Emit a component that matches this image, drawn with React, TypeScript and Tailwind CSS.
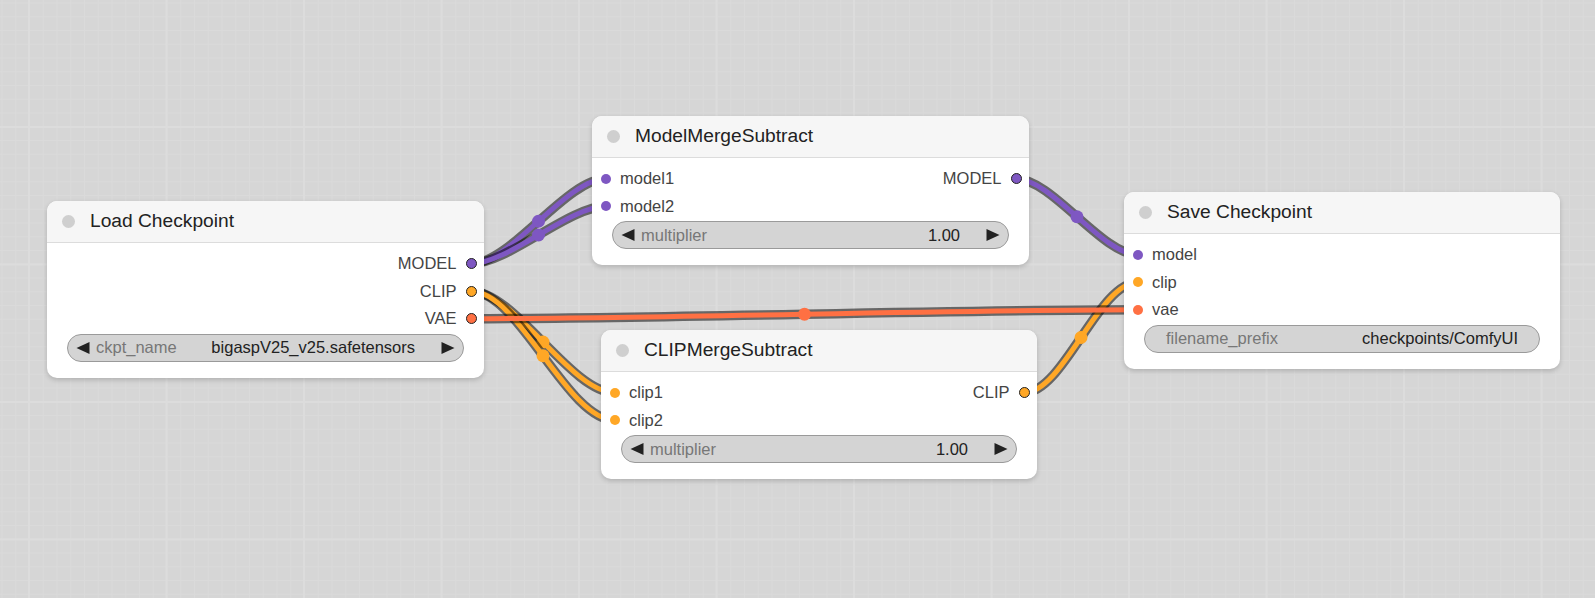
import React from "react"

const COLORS = {
  MODEL: "#7e57c2",
  CLIP: "#ffa726",
  VAE: "#ff7043",
} as const

type SlotType = keyof typeof COLORS

type Slot = { name: string; type: SlotType }

type Widget = { kind: "combo" | "number" | "text"; label: string; value: string }

type NodeDef = {
  id: string
  title: string
  x: number
  y: number
  w: number
  inputs: Slot[]
  outputs: Slot[]
  widget: Widget
}

const HEADER = 42
const BODY_TOP = 7
const ROW = 27.5

const nodes: NodeDef[] = [
  {
    id: "load",
    title: "Load Checkpoint",
    x: 47,
    y: 201,
    w: 437,
    inputs: [],
    outputs: [
      { name: "MODEL", type: "MODEL" },
      { name: "CLIP", type: "CLIP" },
      { name: "VAE", type: "VAE" },
    ],
    widget: { kind: "combo", label: "ckpt_name", value: "bigaspV25_v25.safetensors" },
  },
  {
    id: "mms",
    title: "ModelMergeSubtract",
    x: 592,
    y: 116,
    w: 437,
    inputs: [
      { name: "model1", type: "MODEL" },
      { name: "model2", type: "MODEL" },
    ],
    outputs: [{ name: "MODEL", type: "MODEL" }],
    widget: { kind: "number", label: "multiplier", value: "1.00" },
  },
  {
    id: "cms",
    title: "CLIPMergeSubtract",
    x: 601,
    y: 330,
    w: 436,
    inputs: [
      { name: "clip1", type: "CLIP" },
      { name: "clip2", type: "CLIP" },
    ],
    outputs: [{ name: "CLIP", type: "CLIP" }],
    widget: { kind: "number", label: "multiplier", value: "1.00" },
  },
  {
    id: "save",
    title: "Save Checkpoint",
    x: 1124,
    y: 192,
    w: 436,
    inputs: [
      { name: "model", type: "MODEL" },
      { name: "clip", type: "CLIP" },
      { name: "vae", type: "VAE" },
    ],
    outputs: [],
    widget: { kind: "text", label: "filename_prefix", value: "checkpoints/ComfyUI" },
  },
]

// [from node, output index, to node, input index]
const links: [string, number, string, number][] = [
  ["load", 0, "mms", 0],
  ["load", 0, "mms", 1],
  ["mms", 0, "save", 0],
  ["load", 1, "cms", 0],
  ["load", 1, "cms", 1],
  ["cms", 0, "save", 1],
  ["load", 2, "save", 2],
]

function slotPos(node: NodeDef, index: number, output: boolean) {
  const y = node.y + HEADER + BODY_TOP + ROW * index + ROW / 2
  const x = output ? node.x + node.w - 13 : node.x + 14
  return { x, y }
}

function findNode(id: string) {
  return nodes.find((n) => n.id === id)!
}

function Links() {
  return (
    <svg className="absolute inset-0" width={1595} height={598}>
      {links.map(([from, oi, to, ii], i) => {
        const a = slotPos(findNode(from), oi, true)
        const b = slotPos(findNode(to), ii, false)
        const dist = Math.hypot(b.x - a.x, b.y - a.y) * 0.25
        const d = `M${a.x},${a.y} C${a.x + dist},${a.y} ${b.x - dist},${b.y} ${b.x},${b.y}`
        const color = COLORS[findNode(from).outputs[oi].type]
        return (
          <g key={i}>
            <path d={d} fill="none" stroke="rgba(0,0,0,0.52)" strokeWidth={9.5} />
            <path d={d} fill="none" stroke={color} strokeWidth={5} />
            <circle cx={(a.x + b.x) / 2} cy={(a.y + b.y) / 2} r={6.5} fill={color} />
          </g>
        )
      })}
    </svg>
  )
}

function Arrow({ dir }: { dir: "left" | "right" }) {
  return (
    <svg width="14" height="14" viewBox="0 0 14 14" className="shrink-0">
      <polygon points={dir === "left" ? "13.5,1 13.5,13 0.5,7" : "0.5,1 0.5,13 13.5,7"} fill="#222" />
    </svg>
  )
}

function NodeWidget({ widget }: { widget: Widget }) {
  if (widget.kind === "text") {
    return (
      <div className="mx-[20px] mt-[1px] flex h-[28px] items-center rounded-full border border-[#9a9a9a] bg-[#d4d4d4] px-[21px] text-[16.5px]">
        <span className="text-[#777]">{widget.label}</span>
        <span className="ml-auto text-[#222]">{widget.value}</span>
      </div>
    )
  }
  return (
    <div className="mx-[20px] mt-[1px] flex h-[28px] items-center rounded-full border border-[#9a9a9a] bg-[#d4d4d4] pl-[8px] pr-[8px] text-[16.5px]">
      <Arrow dir="left" />
      <span className="ml-[6px] text-[#777]">{widget.label}</span>
      <span className="ml-auto mr-[26px] text-[#222]">{widget.value}</span>
      <Arrow dir="right" />
    </div>
  )
}

function GraphNode({ node }: { node: NodeDef }) {
  const rows = Math.max(node.inputs.length, node.outputs.length)

  return (
    <div
      className="absolute overflow-hidden rounded-[10px] bg-white shadow-[0_2px_5px_rgba(0,0,0,0.18)]"
      style={{ left: node.x, top: node.y, width: node.w }}
    >
      <div className="flex h-[42px] items-center border-b border-[#dcdcdc] bg-[#f6f6f6] pl-[15px]">
        <span className="h-[13px] w-[13px] rounded-full bg-[#cfcfcf]" />
        <span className="ml-[15px] text-[19.2px] text-[#222]">{node.title}</span>
      </div>
      <div className="pt-[7px] pb-[16px]">
        {Array.from({ length: rows }).map((_, i) => {
          const input = node.inputs[i]
          const output = node.outputs[i]
          return (
            <div key={i} className="flex h-[27.5px] items-center text-[16.5px] text-[#444]">
              {input && (
                <div className="flex items-center pl-[9px]">
                  <span
                    className="h-[10px] w-[10px] rounded-full"
                    style={{ backgroundColor: COLORS[input.type] }}
                  />
                  <span className="ml-[9px]">{input.name}</span>
                </div>
              )}
              {output && (
                <div className="ml-auto flex items-center pr-[7.5px]">
                  <span>{output.name}</span>
                  <span
                    className="ml-[9px] h-[11px] w-[11px] rounded-full border-[1.5px] border-[#222]"
                    style={{ backgroundColor: COLORS[output.type] }}
                  />
                </div>
              )}
            </div>
          )
        })}
        <NodeWidget widget={node.widget} />
      </div>
    </div>
  )
}

export default function App() {
  return (
    <div className="relative h-[598px] w-[1595px] overflow-hidden bg-[#d6d6d6] bg-[image:linear-gradient(to_right,#dcdcdc_2px,transparent_2px),linear-gradient(to_bottom,#dcdcdc_2px,transparent_2px),linear-gradient(to_right,#dadada_1px,transparent_1px),linear-gradient(to_bottom,#dadada_1px,transparent_1px)] bg-size-[137.5px_137.5px,137.5px_137.5px,13.75px_13.75px,13.75px_13.75px] bg-position-[28px_0,0_126px,1.5px_0,0_2.5px] font-['Liberation_Sans',Arial,sans-serif]">
      <Links />
      {nodes.map((n) => (
        <GraphNode key={n.id} node={n} />
      ))}
    </div>
  )
}
